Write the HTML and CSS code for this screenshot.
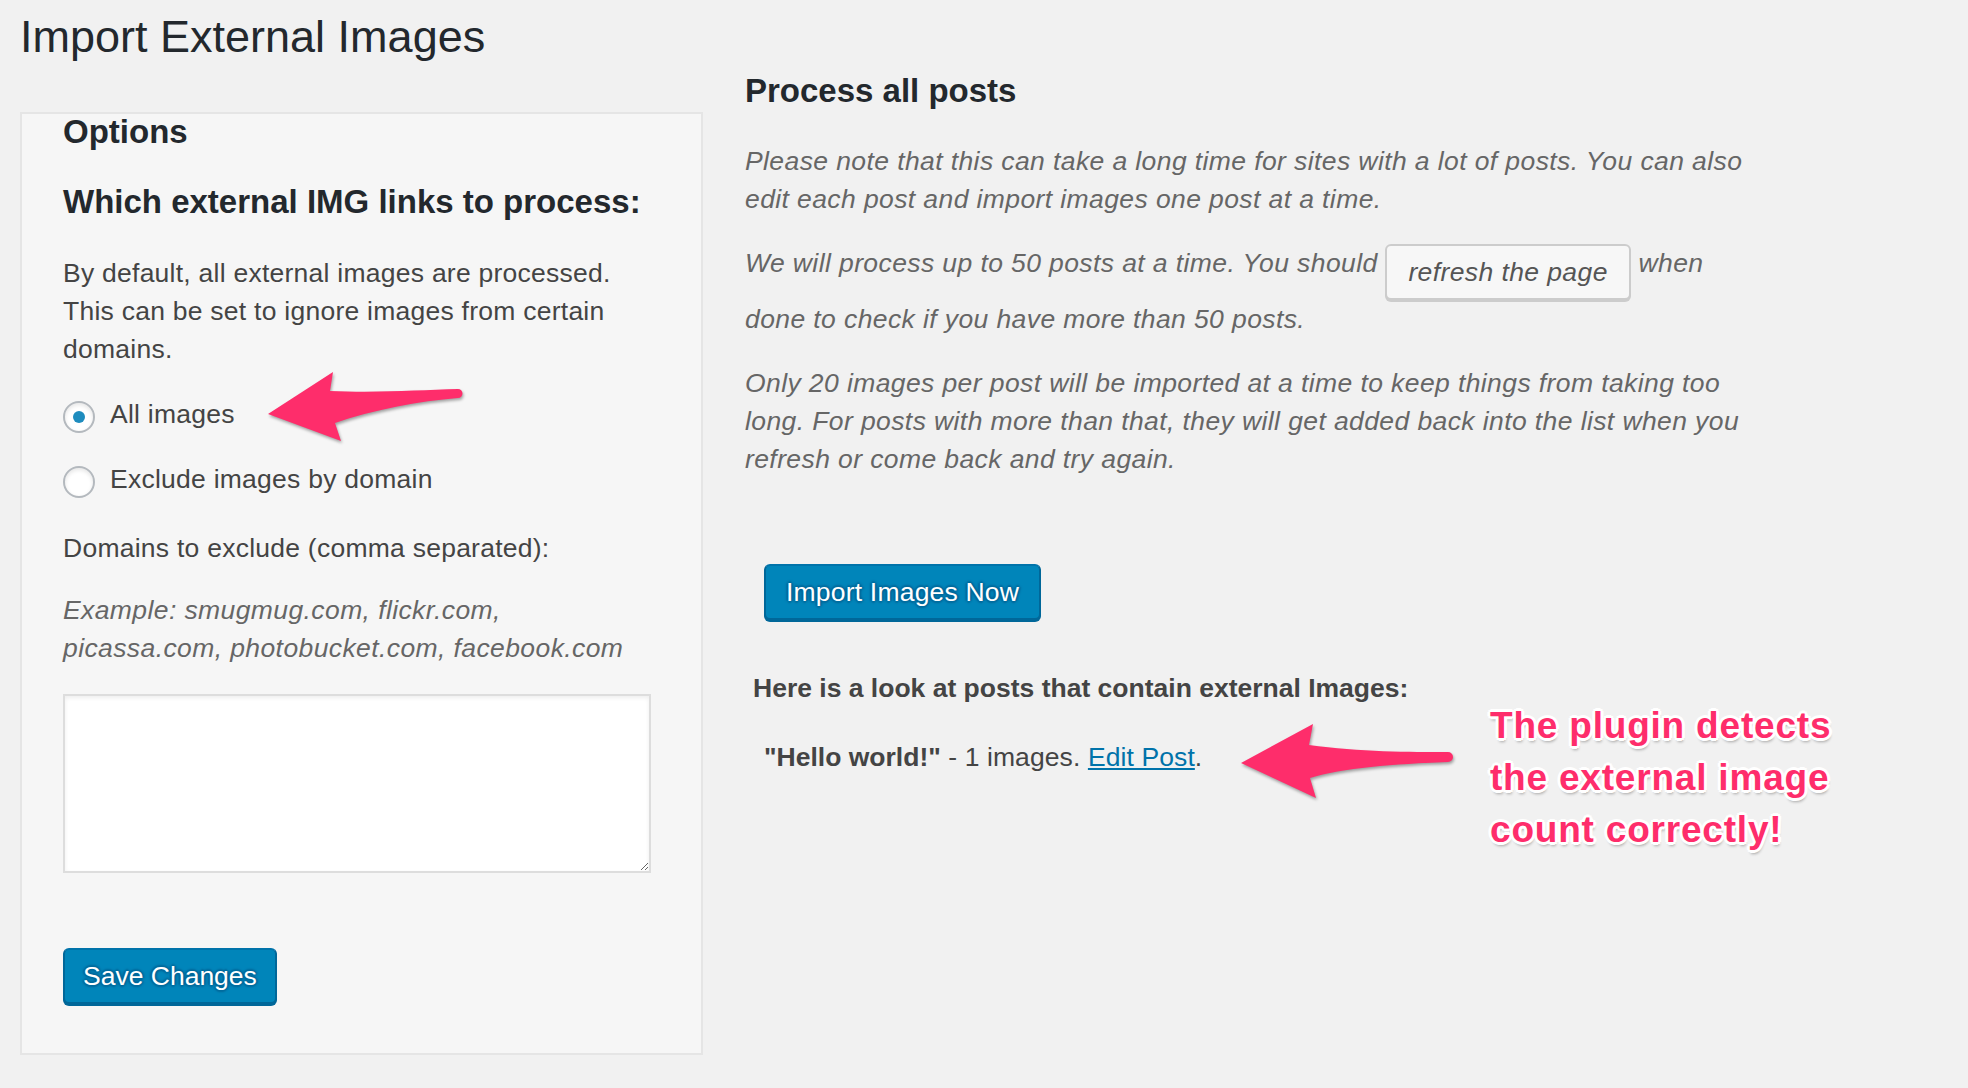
FILE: index.html
```html
<!DOCTYPE html>
<html lang="en">
<head>
<meta charset="utf-8">
<title>Import External Images</title>
<link rel="stylesheet" href="styles.css">
</head>
<body>
<div class="page">
  <div class="wrap">
    <h1 class="page-title">Import External Images</h1>
    <div class="columns">
      <div class="options-box">
        <h2 class="box-title">Options</h2>
        <h2 class="section-title">Which external IMG links to process:</h2>
        <p class="intro">By default, all external images are processed. This can be set to ignore images from certain domains.</p>
        <div class="radio-list">
          <label class="radio-row"><span class="radio checked"></span><span class="radio-label">All images</span></label>
          <label class="radio-row"><span class="radio"></span><span class="radio-label">Exclude images by domain</span></label>
        </div>
        <p class="field-label">Domains to exclude (comma separated):</p>
        <p class="description example">Example: smugmug.com, flickr.com,<br>picassa.com, photobucket.com, facebook.com</p>
        <textarea class="domains"></textarea>
        <div class="submit"><button class="button button-primary save-button">Save Changes</button></div>
      </div>
      <div class="process">
        <h2 class="process-title">Process all posts</h2>
        <p class="description note">Please note that this can take a long time for sites with a lot of posts. You can also edit each post and import images one post at a time.</p>
        <p class="description note">We will process up to 50 posts at a time. You should <button class="button button-secondary">refresh the page</button> when done to check if you have more than 50 posts.</p>
        <p class="description note">Only 20 images per post will be imported at a time to keep things from taking too long. For posts with more than that, they will get added back into the list when you refresh or come back and try again.</p>
        <div class="import-row"><button class="button button-primary">Import Images Now</button></div>
        <h4 class="posts-heading">Here is a look at posts that contain external Images:</h4>
        <p class="post-item"><strong>"Hello world!"</strong> - 1 images. <a class="edit-link" href="#">Edit Post</a>.</p>
      </div>
    </div>
  </div>

  <svg class="annotations" width="1968" height="1088" viewBox="0 0 1968 1088" aria-hidden="true">
    <path class="arrow" d="M268,414 L333,372 L330,391 C380,393 420,390 458,389 A4.5,4.5 0 0 1 458,398 C420,401 372,410 335,423 L341,441 Z"/>
    <path class="arrow" d="M1241,763 L1313,724 L1309,745 C1360,752 1410,752 1448,752 A5,5 0 0 1 1448,762 C1395,764 1342,768 1310,778 L1316,798 Z"/>
  </svg>
  <div class="callout">The plugin detects<br>the external image<br>count correctly!</div>
</div>
</body>
</html>
```
FILE: styles.css
```css
html, body {
  margin: 0;
  padding: 0;
  background: #f1f1f1;
}

body {
  font-family: "Liberation Sans", Arial, sans-serif;
  font-size: 26.5px;
  line-height: 38px;
  letter-spacing: 0.25px;
  color: #444;
}

.page {
  position: relative;
  width: 1968px;
  height: 1088px;
  overflow: hidden;
}

.wrap {
  padding: 9px 0 0 20px;
}

.page-title {
  margin: 0;
  font-size: 45px;
  line-height: 56px;
  font-weight: 400;
  letter-spacing: 0;
  color: #23282d;
}

.columns {
  display: flex;
  align-items: flex-start;
}

/* Left options panel */
.options-box {
  box-sizing: border-box;
  width: 683px;
  margin-top: 47px;
  padding: 0 0 49px 41px;
  background: #f6f6f6;
  border: 2px solid #e5e5e5;
}

.box-title,
.section-title,
.process-title {
  margin: 0;
  font-size: 33px;
  line-height: 36px;
  font-weight: 700;
  letter-spacing: 0;
  color: #23282d;
}

.section-title {
  margin-top: 34px;
}

.intro {
  margin: 34px 0 0;
  width: 570px;
}

.radio-list {
  margin-top: 27px;
  display: flex;
  flex-direction: column;
  gap: 27px;
}

.radio-row {
  display: flex;
  align-items: center;
  height: 38px;
}

.radio {
  box-sizing: border-box;
  width: 32px;
  height: 32px;
  margin-top: 5px;
  border: 2px solid #b4b9be;
  border-radius: 50%;
  background: #fff;
  box-shadow: inset 0 2px 4px rgba(0, 0, 0, 0.1);
  display: flex;
  align-items: center;
  justify-content: center;
  flex: none;
}

.radio.checked::before {
  content: "";
  width: 12px;
  height: 12px;
  border-radius: 50%;
  background: #1e8cbe;
}

.radio-label {
  margin-left: 15px;
}

.field-label {
  margin: 31px 0 0;
}

.description {
  font-style: italic;
  letter-spacing: 0.4px;
  color: #666;
}

.example {
  margin: 24px 0 0;
}

.domains {
  display: block;
  box-sizing: border-box;
  width: 588px;
  height: 179px;
  margin: 27px 0 0;
  padding: 4px 8px;
  background: #fff;
  border: 2px solid #ddd;
  box-shadow: inset 0 2px 4px rgba(0, 0, 0, 0.07);
  font: inherit;
}

.submit {
  margin-top: 75px;
}

/* Buttons */
.button {
  box-sizing: border-box;
  display: inline-block;
  height: 56px;
  margin: 0;
  padding: 0 20px 2px;
  font-family: inherit;
  font-size: 26.5px;
  line-height: 52px;
  letter-spacing: 0.2px;
  border: 2px solid;
  border-radius: 6px;
  white-space: nowrap;
  cursor: pointer;
  vertical-align: top;
}

.button-primary {
  background: #0085ba;
  border-color: #0073aa #006799 #006799;
  box-shadow: 0 2px 0 #006799;
  color: #fff;
  text-shadow: 0 -2px 2px #006799, 2px 0 2px #006799, 0 2px 2px #006799, -2px 0 2px #006799;
}

.save-button {
  padding: 0 18px 2px;
  letter-spacing: 0;
}

.button-secondary {
  background: #f7f7f7;
  border-color: #ccc;
  box-shadow: 0 2px 0 #ccc;
  color: #555;
  font-style: italic;
  letter-spacing: 0.4px;
  padding: 0 21px 2px;
}

/* Right column */
.process {
  width: 1012px;
  margin-left: 42px;
  padding-top: 8px;
}

.note {
  margin: 26px 0 0;
}

.process-title + .note {
  margin-top: 33px;
}

.import-row {
  margin: 86px 0 0 19px;
}

.posts-heading {
  margin: 49px 0 0 8px;
  font-size: 26.5px;
  line-height: 38px;
  font-weight: 700;
  letter-spacing: 0;
  color: #444;
}

.post-item {
  margin: 31px 0 0 19px;
  letter-spacing: 0.1px;
}

.post-item strong {
  letter-spacing: 0;
}

.edit-link {
  color: #0073aa;
  text-decoration: underline;
}

/* Annotation overlay */
.annotations {
  position: absolute;
  left: 0;
  top: 0;
  pointer-events: none;
  filter: drop-shadow(1px 2px 1.5px rgba(0, 0, 0, 0.35));
}

.arrow {
  fill: #fe2d6b;
}

.callout {
  position: absolute;
  left: 1490px;
  top: 700px;
  font-size: 37px;
  line-height: 52px;
  font-weight: 700;
  letter-spacing: 0.8px;
  color: #fe2d6b;
  text-shadow:
    3px 0 0 #fff, -3px 0 0 #fff, 0 3px 0 #fff, 0 -3px 0 #fff,
    2px 2px 0 #fff, -2px 2px 0 #fff, 2px -2px 0 #fff, -2px -2px 0 #fff,
    1px 4px 3px rgba(0, 0, 0, 0.3);
}
```
